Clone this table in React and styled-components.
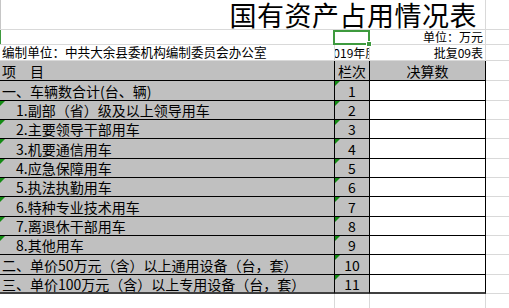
import React from 'react';
import styled, { createGlobalStyle } from 'styled-components';

const GlobalStyle = createGlobalStyle`
  html, body {
    margin: 0;
    padding: 0;
    background: #fff;
  }
  * {
    box-sizing: border-box;
  }
`;

//datos de la tabla
const filas = [
    { label: '一、车辆数合计(台、辆)', no: 1, h: 20 },
    { label: '1.副部（省）级及以上领导用车', no: 2, h: 19, sub: true },
    { label: '2.主要领导干部用车', no: 3, h: 19, sub: true },
    { label: '3.机要通信用车', no: 4, h: 20, sub: true },
    { label: '4.应急保障用车', no: 5, h: 19, sub: true },
    { label: '5.执法执勤用车', no: 6, h: 19, sub: true },
    { label: '6.特种专业技术用车', no: 7, h: 20, sub: true },
    { label: '7.离退休干部用车', no: 8, h: 19, sub: true },
    { label: '8.其他用车', no: 9, h: 19, sub: true },
    { label: '二、单价50万元（含）以上通用设备（台，套）', no: 10, h: 20 },
    { label: '三、单价100万元（含）以上专用设备（台，套）', no: 11, h: 19, last: true },
];

const App = () => {
    return (
        <Hoja>
            <GlobalStyle />

            <Fila $h={30}>
                <Titulo $marca="#c6c6c6">国有资产占用情况表</Titulo>
                <Celda />
            </Fila>

            <Fila $h={15}>
                <Celda $marca="#3e9a3e" />
                <Celda $abierta>
                    <Seleccion>
                        <Asa />
                    </Seleccion>
                </Celda>
                <Celda $align="flex-end" $size={12}>单位：万元</Celda>
                <Celda />
            </Fila>

            <Fila $h={16}>
                <Celda $size={12.6}>编制单位：中共大余县委机构编制委员会办公室</Celda>
                <Celda $align="center" $size={12} $pad={0}>2019年度</Celda>
                <Celda $align="flex-end" $size={12}>批复09表</Celda>
                <Celda />
            </Fila>

            <Fila $h={20}>
                <Celda $gris $borde>项　目</Celda>
                <Celda $gris $borde $align="center">栏次</Celda>
                <Celda $gris $borde $align="center">决算数</Celda>
                <Celda />
            </Fila>

            {filas.map(f => (
                <Fila key={f.no} $h={f.h}>
                    <Celda $gris $borde $last={f.last} $indent={f.sub ? 16 : 2}>
                        {f.sub ? <Triangulo /> : null}
                        {f.label}
                    </Celda>
                    <Celda $gris $borde $last={f.last} $align="center">
                        <Triangulo />
                        {f.no}
                    </Celda>
                    <Celda $borde $last={f.last} />
                    <Celda />
                </Fila>
            ))}

            <Fila $h={20}>
                <Celda />
                <Celda />
                <Celda />
                <Celda />
            </Fila>
        </Hoja>
    );
}

export const Hoja = styled.div`
    width: 509px;
    height: 308px;
    overflow: hidden;
    font-family: "Noto Sans CJK SC", "Liberation Sans", sans-serif;
    color: #000;
`;

export const Fila = styled.div`
    display: grid;
    grid-template-columns: 335px 35px 116px 1fr;
    height: ${p => p.$h}px;
`;

export const Celda = styled.div`
    position: relative;
    display: flex;
    align-items: center;
    justify-content: ${p => p.$align || 'flex-start'};
    padding: 0 ${p => (p.$pad !== undefined ? p.$pad : 2)}px 0 ${p => (p.$pad !== undefined ? p.$pad : (p.$indent || 2))}px;
    background: ${p => (p.$gris ? '#c0c0c0' : '#fff')};
    border-right: 1px solid ${p => (p.$borde ? '#000' : '#d9d9d9')};
    border-bottom: ${p => (p.$last ? '2px solid #404040' : `1px solid ${p.$borde ? '#000' : '#d9d9d9'}`)};
    box-shadow: ${p => (p.$marca ? `inset 1px 0 0 ${p.$marca}` : 'none')};
    overflow: ${p => (p.$abierta ? 'visible' : 'hidden')};
    white-space: nowrap;
    font-size: ${p => p.$size || 14}px;
    line-height: 1;
    &:last-child {
        border-right: none;
    }
`;

export const Titulo = styled.div`
    grid-column: 1 / 4;
    display: flex;
    align-items: center;
    justify-content: flex-end;
    padding-right: 8px;
    border-right: 1px solid #d9d9d9;
    border-bottom: 1px solid #d9d9d9;
    box-shadow: inset 1px 0 0 ${p => p.$marca};
    font-size: 27px;
    letter-spacing: 0.5px;
    line-height: 1;
    white-space: nowrap;
`;

export const Seleccion = styled.div`
    position: absolute;
    left: -2px;
    top: 0;
    right: -1px;
    bottom: -1px;
    border: 2px solid #3e9a3e;
    z-index: 2;
`;

export const Asa = styled.span`
    position: absolute;
    right: -4px;
    bottom: -4px;
    width: 6px;
    height: 6px;
    background: #3e9a3e;
    border: 1px solid #fff;
`;

export const Triangulo = styled.span`
    position: absolute;
    top: 0;
    left: 0;
    width: 0;
    height: 0;
    border-top: 5px solid #138a13;
    border-right: 5px solid transparent;
`;

export default App
